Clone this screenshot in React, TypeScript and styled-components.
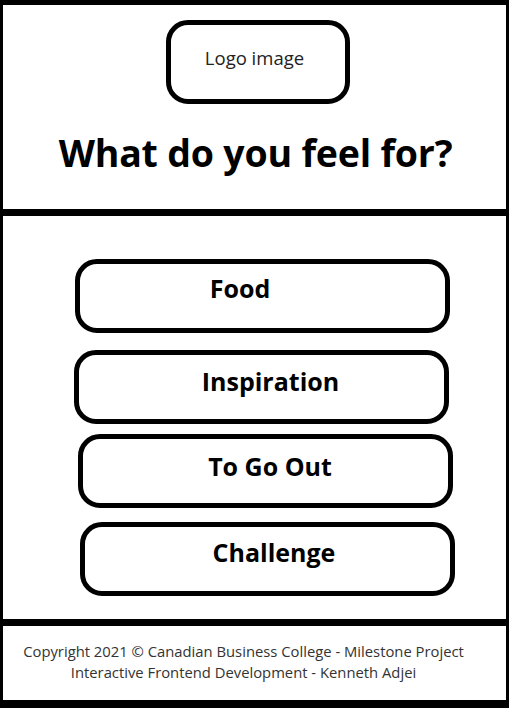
import React from "react";
import styled, { createGlobalStyle } from "styled-components";

const GlobalStyle = createGlobalStyle`
  html, body { margin: 0; padding: 0; background: #ffffff; }
  body { font-family: "Open Sans", "Noto Sans", Arial, sans-serif; color: #000; }
`;

const Frame = styled.div`
  box-sizing: border-box;
  width: 509px;
  height: 708px;
  border-style: solid;
  border-color: #000;
  border-width: 5px 3px 8px 3px;
  display: flex;
  flex-direction: column;
  background: #fff;
`;

const Header = styled.header`
  box-sizing: border-box;
  height: 204px;
  display: flex;
  flex-direction: column;
  align-items: center;
  padding-top: 15px;
`;

const LogoBox = styled.div`
  box-sizing: border-box;
  width: 184px;
  height: 84px;
  margin-left: 6px;
  border: 5px solid #000;
  border-radius: 22px;
  display: flex;
  align-items: flex-start;
  justify-content: center;
  padding: 20px 6px 0 0;
  font-size: 18.5px;
  color: #222;
`;

const Title = styled.h1`
  margin: 24px 0 0 0;
  font-size: 37.5px;
  font-weight: 700;
  line-height: 50px;
  letter-spacing: -0.2px;
  padding-left: 2px;
`;

const Divider = styled.div`
  height: 7px;
  background: #000;
  flex-shrink: 0;
`;

const Main = styled.main`
  box-sizing: border-box;
  height: 403px;
  display: flex;
  flex-direction: column;
  padding-top: 43px;
`;

const Choice = styled.button<{ $x: number; $gap: number; $pl: number; $pr: number; $pb: number }>`
  box-sizing: border-box;
  width: 375px;
  height: 74px;
  margin: ${(p) => p.$gap}px 0 0 ${(p) => p.$x}px;
  border: 5px solid #000;
  border-radius: 22px;
  background: #fff;
  display: flex;
  justify-content: center;
  align-items: center;
  padding: 0 ${(p) => p.$pr}px ${(p) => p.$pb}px ${(p) => p.$pl}px;
  font-family: "Open Sans", "Noto Sans", Arial, sans-serif;
  font-size: 25px;
  font-weight: 700;
  color: #000;
  cursor: pointer;
`;

const Footer = styled.footer`
  flex: 1;
  display: flex;
  flex-direction: column;
  align-items: center;
  justify-content: center;
  padding: 0 22px 2px 0;
  font-size: 14.8px;
  line-height: 21px;
  color: #333;
`;

const FooterLine = styled.div`
  white-space: nowrap;
`;

const choices = [
  { label: "Food", x: 72, gap: 0, pl: 0, pr: 45, pb: 16 },
  { label: "Inspiration", x: 71, gap: 17, pl: 18, pr: 0, pb: 13 },
  { label: "To Go Out", x: 75, gap: 10, pl: 9, pr: 0, pb: 11 },
  { label: "Challenge", x: 77, gap: 14, pl: 13, pr: 0, pb: 15 },
];

export default function App() {
  return (
    <>
      <GlobalStyle />
      <Frame>
        <Header>
          <LogoBox>Logo image</LogoBox>
          <Title>What do you feel for?</Title>
        </Header>
        <Divider />
        <Main>
          {choices.map((c) => (
            <Choice key={c.label} $x={c.x} $gap={c.gap} $pl={c.pl} $pr={c.pr} $pb={c.pb}>
              {c.label}
            </Choice>
          ))}
        </Main>
        <Divider />
        <Footer>
          <FooterLine>Copyright 2021 © Canadian Business College - Milestone Project</FooterLine>
          <FooterLine>Interactive Frontend Development - Kenneth Adjei</FooterLine>
        </Footer>
      </Frame>
    </>
  );
}
